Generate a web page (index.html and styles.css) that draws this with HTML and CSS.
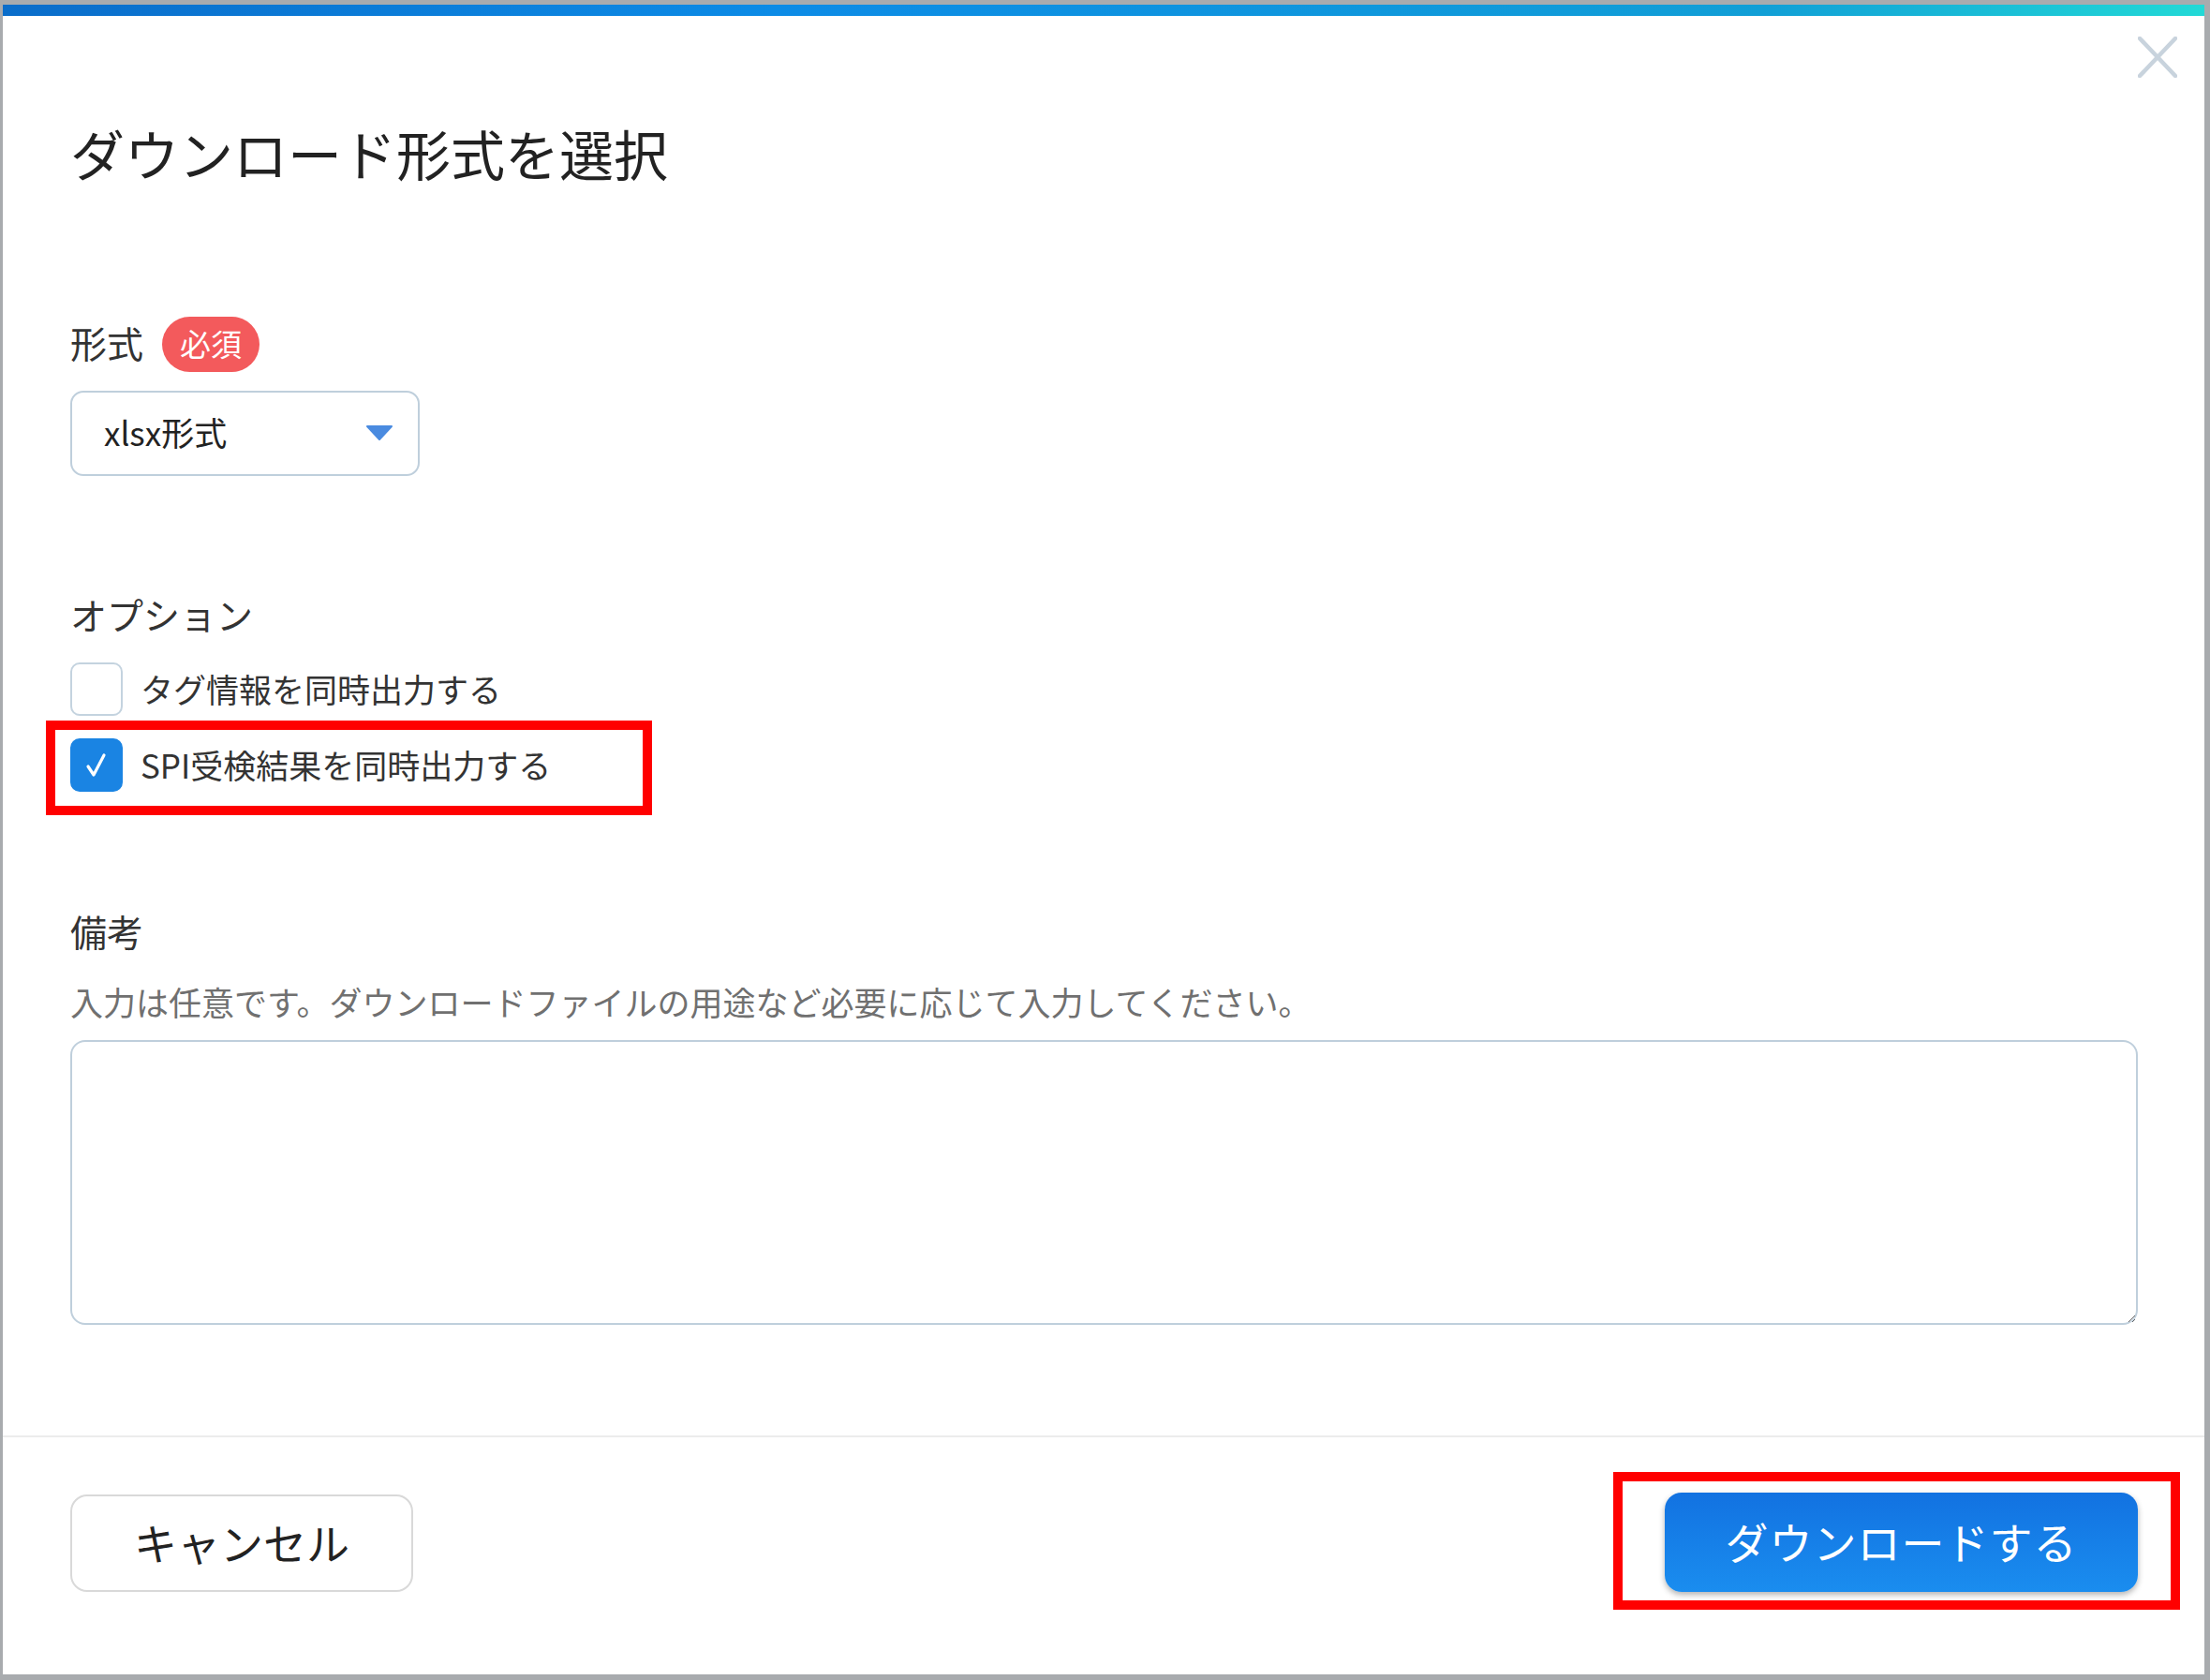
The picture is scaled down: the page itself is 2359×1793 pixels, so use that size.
FILE: index.html
```html
<!DOCTYPE html>
<html lang="ja">
<head>
	<meta charset="utf-8">
	<title>ダウンロード形式を選択</title>
	<link rel="stylesheet" href="styles.css">
</head>
<body>
	<div class="modal">
		<div class="modal-bar"></div>
		<button class="modal-close" type="button" aria-label="閉じる">
			<svg width="42" height="44" viewBox="0 0 42 44">
				<path d="M2 2 L40 42 M40 2 L2 42" stroke="#c8d3dd" stroke-width="4.5" stroke-linecap="round"/>
			</svg>
		</button>
		<div class="modal-body">
			<h2 class="modal-title">ダウンロード形式を選択</h2>

			<div class="field-label field-label-format">
				<span class="field-label-text">形式</span>
				<span class="badge">必須</span>
			</div>
			<div class="select">
				<span>xlsx形式</span>
				<svg class="select-arrow" width="30" height="18" viewBox="0 0 30 18">
					<path d="M2 2 L28 2 L15 16 Z" fill="#4a8be0" stroke="#4a8be0" stroke-width="2" stroke-linejoin="round"/>
				</svg>
			</div>

			<div class="field-label field-label-option">オプション</div>
			<label class="check check-first">
				<span class="check-box"></span>
				<span class="check-text">タグ情報を同時出力する</span>
			</label>
			<label class="check check-second">
				<span class="check-box checked">
					<svg width="26" height="28" viewBox="0 0 26 28">
						<path d="M4 15 L10 24 L21 3" fill="none" stroke="#fff" stroke-width="3.2" stroke-linecap="round" stroke-linejoin="round"/>
					</svg>
				</span>
				<span class="check-text">SPI受検結果を同時出力する</span>
				<span class="mark mark-option"></span>
			</label>

			<div class="field-label field-label-memo">備考</div>
			<p class="field-help">入力は任意です。ダウンロードファイルの用途など必要に応じて入力してください。</p>
			<textarea class="memo"></textarea>
		</div>
		<div class="modal-footer">
			<button class="btn btn-cancel" type="button">キャンセル</button>
			<div class="btn-wrap">
				<button class="btn btn-primary" type="button">ダウンロードする</button>
				<span class="mark mark-button"></span>
			</div>
		</div>
	</div>
</body>
</html>
```

FILE: styles.css
```css
html, body {
	margin: 0;
	height: 100%;
}
body {
	background-color: #a8abae;
	padding: 5px 0 0 3px;
	box-sizing: border-box;
	font-family: "Noto Sans CJK JP", "Noto Sans", sans-serif;
	color: #222;
}
.modal {
	position: relative;
	width: 2350px;
	height: 1782px;
	background-color: #fff;
	display: flex;
	flex-direction: column;
}
.modal-bar {
	height: 12px;
	background: linear-gradient(90deg, #0a6dca 0%, #0c8be6 35%, #119fd6 80%, #22d9d6 100%);
}
.modal-close {
	position: absolute;
	top: 34px;
	right: 29px;
	padding: 0;
	border: none;
	background: none;
	line-height: 0;
	cursor: pointer;
}
.modal-body {
	padding: 0 71px 118px 72px;
}
.modal-title {
	margin: 106px 0 0;
	font-size: 58px;
	line-height: 80px;
	font-weight: 400;
	color: #222;
}
.field-label {
	font-size: 39px;
	line-height: 56px;
	color: #333;
}
.field-label-format {
	margin-top: 135px;
	height: 59px;
	display: flex;
	align-items: center;
	gap: 20px;
}
.field-label-text {
	padding-bottom: 5px;
}
.badge {
	height: 59px;
	padding: 0 19px 3px;
	border-radius: 30px;
	background-color: #f35a5c;
	color: #fff;
	font-size: 33px;
	line-height: 56px;
	box-sizing: border-box;
}
.select {
	margin-top: 20px;
	width: 373px;
	height: 91px;
	border: 2px solid #bfcfdc;
	border-radius: 14px;
	padding: 0 26px 4px 34px;
	box-sizing: border-box;
	display: flex;
	align-items: center;
	justify-content: space-between;
	font-size: 35px;
	color: #222;
}
.select-arrow {
	margin-top: 2px;
}
.field-label-option {
	margin-top: 119px;
}
.check {
	position: relative;
	display: flex;
	align-items: center;
	gap: 19px;
	height: 57px;
	font-size: 35px;
	color: #333;
}
.check-text {
	padding-bottom: 3px;
}
.check-first {
	margin-top: 24px;
}
.check-second {
	margin-top: 24px;
}
.check-box {
	width: 56px;
	height: 57px;
	border: 2px solid #c4d3df;
	border-radius: 10px;
	box-sizing: border-box;
	flex-shrink: 0;
}
.check-box.checked {
	background-color: #1a84e3;
	border-color: #1a84e3;
	display: flex;
	align-items: center;
	justify-content: center;
}
.mark {
	position: absolute;
	border: 10px solid #ff0000;
	box-sizing: border-box;
	pointer-events: none;
}
.mark-option {
	left: -26px;
	top: -19px;
	width: 647px;
	height: 101px;
}
.field-label-memo {
	margin-top: 120px;
}
.field-help {
	margin: 24px 0 0;
	font-size: 35px;
	line-height: 48px;
	color: #707070;
}
.memo {
	display: block;
	margin-top: 17px;
	width: 100%;
	height: 304px;
	border: 2px solid #bfcfdc;
	border-radius: 16px;
	box-sizing: border-box;
	resize: vertical;
	font-family: inherit;
	font-size: 35px;
}
.modal-footer {
	border-top: 2px solid #ececec;
	padding: 61px 71px 0 72px;
	display: flex;
	justify-content: space-between;
	align-items: flex-start;
}
.btn {
	font-family: inherit;
	font-size: 46px;
	padding: 0 0 5px;
	cursor: pointer;
	box-sizing: border-box;
}
.btn-cancel {
	width: 366px;
	height: 104px;
	border: 2px solid #d9d9d9;
	border-radius: 18px;
	background-color: #fff;
	color: #222;
}
.btn-wrap {
	position: relative;
	margin-top: -2px;
}
.btn-primary {
	display: block;
	width: 505px;
	height: 106px;
	border: none;
	border-radius: 18px;
	background: linear-gradient(180deg, #1272e1 0%, #1a8def 100%);
	box-shadow: 0 3px 6px rgba(0, 0, 0, 0.3);
	color: #fff;
	letter-spacing: 1px;
}
.mark-button {
	left: -55px;
	top: -22px;
	width: 605px;
	height: 147px;
}
```
